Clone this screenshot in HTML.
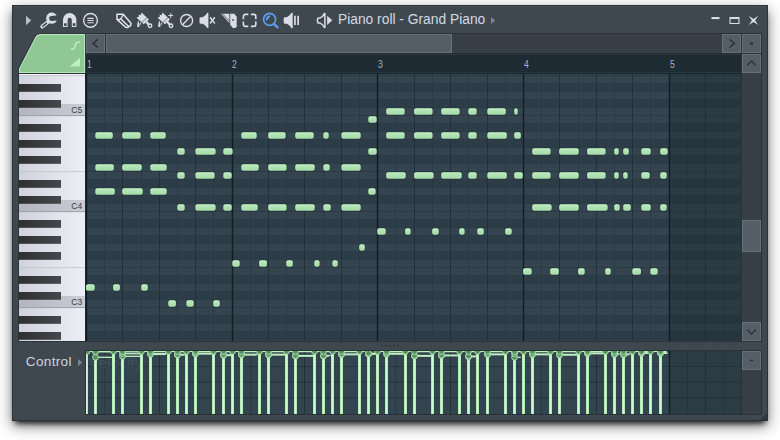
<!DOCTYPE html>
<html lang="en">
<head>
<meta charset="utf-8">
<title>Piano roll - Grand Piano</title>
<style>
html,body{margin:0;padding:0;background:#fff;}
body{width:780px;height:440px;position:relative;overflow:hidden;font-family:"Liberation Sans",sans-serif;}
.win{position:absolute;left:12px;top:5px;width:756px;height:416px;background:#3f484f;box-sizing:border-box;border:1px solid #2b3339;box-shadow:0 5px 14px 0 rgba(0,0,0,.48), 0 5px 6px -3px rgba(0,0,0,.9), inset 0 1px 0 rgba(255,255,255,.05);}
.abs{position:absolute;}
.page{position:absolute;left:-13px;top:-6px;width:780px;height:440px;}
.title{position:absolute;left:338px;top:11px;font-size:13.8px;line-height:17px;color:#d4d8e2;white-space:nowrap;letter-spacing:0px;}
.btn{position:absolute;box-sizing:border-box;background:#555e66;border:1px solid #687179;}
.track{position:absolute;background-color:#333a41;background-image:linear-gradient(45deg,#3c444b 25%,transparent 25%,transparent 75%,#3c444b 75%),linear-gradient(45deg,#3c444b 25%,transparent 25%,transparent 75%,#3c444b 75%);background-size:2px 2px;background-position:0 0,1px 1px;}
.timeline{position:absolute;left:86px;top:53px;width:655px;height:20px;background:linear-gradient(#222c33 0,#222c33 1px,#2a3740 1px,#2a3740 2px,#1f2b33 2px,#1f2b33 19px,#2a3740 19px,#2a3740 20px);}
.timeline span{position:absolute;transform:scaleX(.86);transform-origin:0 0;top:5.8px;font-size:10px;line-height:12px;color:#a6b3c3;}
.grid{position:absolute;left:86px;top:73px;}
.ctrl{position:absolute;left:86px;top:351px;}
.keys{position:absolute;left:19px;top:73px;}
.lbl{position:absolute;left:25.8px;top:353.6px;font-size:13.6px;line-height:16px;color:#cdd3de;letter-spacing:.3px;}
svg{display:block;}
</style>
</head>
<body>
<div class="win"><div class="page">

<!-- toolbar icons -->
<svg class="abs" style="left:0;top:0" width="780" height="34" viewBox="0 0 780 34">
<g fill="#d9dde7" stroke="none">
 <!-- menu arrow -->
 <path d="M26 15.8V25.2L31.2 20.5Z" fill="#b9bdc9"/>
 <!-- wrench -->
 <path d="M56.9 16H51.6A2.5 2.5 0 0 0 51.6 21H56.6A5.6 5.6 0 1 1 56.9 16Z" transform="rotate(-6 51.2 18.4)"/>
 <path d="M47.4 22.5L42.3 26.5" stroke="#d9dde7" stroke-width="4" stroke-linecap="round" fill="none"/>
 <path d="M46.4 23.3L42.7 26.2" stroke="#3f484f" stroke-width="1.5" stroke-linecap="round" fill="none"/>
 <!-- magnet -->
 <path d="M63 27V19.7A6.7 6.7 0 0 1 76.4 19.7V27H71.8V19.9A2.1 2.1 0 0 0 67.6 19.9V27Z"/>
 <path d="M64.1 23.3H66.6V26H64.1ZM72.8 23.3H75.3V26H72.8Z" fill="#3f484f"/>
 <!-- playlist circle -->
 <circle cx="90.5" cy="20.4" r="6.9" fill="none" stroke="#d9dde7" stroke-width="1.4"/>
 <path d="M87.4 17.8H93.6V18.9H87.4ZM87.4 20H93.6V21.1H87.4ZM87.4 22.2H93.6V23.3H87.4Z"/>
 <!-- pencil -->
 <path d="M117 14.3H123.2L131 23.2L130.8 25.3L127.5 27.6L125.6 27.3L117 19.4Z" fill="none" stroke="#e2e6ee" stroke-width="1.5" stroke-linejoin="round"/>
 <path d="M123.2 14.3L121.8 17.6L119.4 19.7L117 19.4" fill="none" stroke="#e2e6ee" stroke-width="1.3" stroke-linejoin="round"/>
 <path d="M120.7 18.8L128.6 26.5" fill="none" stroke="#e2e6ee" stroke-width="1.4"/>
 <!-- brush 1 -->
 <g id="brush">
  <path d="M136.6 17.7L139 16.4L138.5 14.5L140.6 15.3L141.5 12.4L149 19.5L143.8 24.2Z"/>
  <path d="M147.1 17.5L141.7 22.7" stroke="#3f484f" stroke-width="0.7" fill="none"/>
  <path d="M146.2 21.8L149 24.8" stroke="#d9dde7" stroke-width="2.4" fill="none"/>
  <circle cx="150" cy="25.7" r="1.75" fill="none" stroke="#d9dde7" stroke-width="1.4"/>
  <path d="M138.3 20.2Q140.2 24.4 139.3 27.1H137.3Q136.8 24 138.3 20.2Z"/>
  <path d="M140.5 22Q141.5 23.6 140.9 24.8H140Q139.8 23.6 140.5 22Z"/>
 </g>
 <use href="#brush" x="21" y="0"/>
 <path d="M168.3 15H173.2V16H168.3ZM170.25 13.1H171.25V17.9H170.25Z"/>
 <!-- no sign -->
 <circle cx="186.6" cy="20.5" r="6" fill="none" stroke="#d9dde7" stroke-width="1.4"/>
 <path d="M182.5 24.7L190.8 16.3" stroke="#d9dde7" stroke-width="1.4" fill="none"/>
 <!-- mute -->
 <path d="M200.9 17.3H202.6Q205.7 16 207.3 12.8H208.4V28.1H207.3Q205.7 25 202.6 23.7H200.9Q199.5 23.7 199.5 22.4V18.6Q199.5 17.3 200.9 17.3Z"/>
 <path d="M210 17.3L214.8 23.5M214.8 17.3L210 23.5" stroke="#d9dde7" stroke-width="1.4" fill="none"/>
 <!-- slice -->
 <path d="M221 13.7H229.4V23Z"/>
 <path d="M222.6 13.9L229.2 21" stroke="#3f484f" stroke-width="0.8" fill="none"/>
 <path d="M230.2 13.7H234.2L236.7 16.7V26.6L235.4 27.9H232.9L230.2 24.8Z"/>
 <rect x="232.2" y="19.1" width="1.5" height="1.7" fill="#3f484f"/>
 <!-- select -->
 <path d="M248.3 14.4H245.6Q243.4 14.4 243.4 16.6V19.2M250.9 14.4H253.6Q255.8 14.4 255.8 16.6V19.2M243.4 21.6V24.2Q243.4 26.4 245.6 26.4H248.3M255.8 21.6V24.2Q255.8 26.4 253.6 26.4H250.9" fill="none" stroke="#d9dde7" stroke-width="1.6"/>
 <!-- zoom (blue) -->
 <circle cx="269.6" cy="19.4" r="6" fill="none" stroke="#5d9cf5" stroke-width="1.6"/>
 <path d="M274.4 24.4L277.4 27.1" stroke="#5d9cf5" stroke-width="2.6" stroke-linecap="round" fill="none"/>
 <path d="M266.2 21.2A3.9 3.9 0 0 1 270.8 15.7Z" fill="#5d9cf5"/>
 <!-- speaker bars -->
 <path d="M285.1 17.3H286.8Q289.9 16 291.5 12.8H292.7V28.2H291.5Q289.9 25 286.8 23.7H285.1Q283.7 23.7 283.7 22.4V18.6Q283.7 17.3 285.1 17.3Z"/>
 <path d="M294.1 15.7H295.8V24.9H294.1ZM297.3 15.7H299V24.9H297.3Z"/>
 <!-- title speaker -->
 <path d="M318.6 17.9H320.2Q323 16.6 324.3 13.6H324.9V27.4H324.3Q323 24.4 320.2 23.1H318.6Q317.5 23.1 317.5 22V19Q317.5 17.9 318.6 17.9Z" fill="none" stroke="#d9dde7" stroke-width="1.5" stroke-linejoin="round"/>
 <path d="M327.1 15.7V24.9L332.3 20.3Z"/>
 <!-- title arrow -->
 <path d="M491 17V24L495.2 20.5Z" fill="#7c848e"/>
 <!-- window buttons -->
 <rect x="711.5" y="17" width="8" height="2.1"/>
 <path d="M729.5 17H739.5V24H729.5ZM730.6 19.1V22.9H738.4V19.1Z" fill-rule="evenodd"/>
 <path d="M748.7 15.7L753.5 18.9L758.3 15.7L755.1 20.4L758.3 25.1L753.5 21.9L748.7 25.1L751.9 20.4Z"/>
</g>
</svg>
<div class="title">Piano roll - Grand Piano</div>

<!-- frames -->
<div class="abs" style="left:85px;top:33px;width:677px;height:309px;background:#2a3239"></div>
<div class="abs" style="left:18px;top:73px;width:68px;height:269px;background:#2a3239"></div>
<div class="abs" style="left:85px;top:350px;width:677px;height:65px;background:#2a3239"></div>
<!-- top-left green tab -->
<svg class="abs" style="left:17px;top:33px" width="70" height="42" viewBox="17 33 70 42">
 <path d="M19.5 72.5V68.6L35.6 37.4Q37.1 34.5 40.2 34.5H84.5V72.5Z" fill="#8fc795" stroke="#b7e9b9" stroke-width="1.1"/>
 <path d="M18.4 72.5V68.3L34.6 36.9Q36.4 33.4 40.2 33.4H85.5" fill="none" stroke="#2b343a" stroke-width="1.1" opacity=".8"/>
 <path d="M70.8 49H73.2Q74.2 49 74.6 47.6L76 43.6Q76.5 42.2 77.8 42.2H80.4" fill="none" stroke="#bfeec1" stroke-width="1.5"/>
 <path d="M69.6 66.4L80 57.8V66.4Z" fill="#bfeec1"/>
</svg>

<!-- horizontal scrollbar -->
<div class="btn" style="left:86px;top:34px;width:19px;height:19px"></div>
<div class="track" style="left:106px;top:34px;width:616px;height:19px"></div>
<div class="btn" style="left:106px;top:34px;width:346px;height:19px"></div>
<div class="btn" style="left:722px;top:34px;width:19px;height:19px"></div>
<div class="btn" style="left:742px;top:34px;width:19px;height:19px"></div>
<div class="btn" style="left:742px;top:54px;width:19px;height:19px"></div>
<div class="track" style="left:742px;top:73px;width:19px;height:249px"></div>
<div class="btn" style="left:742px;top:220px;width:19px;height:32px"></div>
<div class="btn" style="left:742px;top:322px;width:19px;height:19px"></div>
<div class="btn" style="left:742px;top:351px;width:19px;height:19px"></div>
<div class="track" style="left:742px;top:370px;width:19px;height:44px"></div>
<svg class="abs" style="left:0;top:30px" width="780" height="390" viewBox="0 30 780 390">
 <g fill="none" stroke="#262d33" stroke-width="1.3">
  <path d="M97.9 39.2L93.1 43.4L97.9 47.6"/>
  <path d="M729.6 39.2L734.4 43.4L729.6 47.6"/>
  <path d="M747.3 65.4L751.5 60.9L755.7 65.4"/>
  <path d="M747.3 329.6L751.5 334.1L755.7 329.6"/>
 </g>
 <rect x="749.9" y="42.5" width="3.1" height="2" fill="#262d33"/>
 <rect x="749.9" y="359.7" width="3.1" height="1.3" fill="#262d33"/>
 <g fill="#2e363c"><rect x="381.2" y="345" width="1.6" height="1.6"/><rect x="385.2" y="345" width="1.6" height="1.6"/><rect x="389.2" y="345" width="1.6" height="1.6"/><rect x="393.2" y="345" width="1.6" height="1.6"/><rect x="397.2" y="345" width="1.6" height="1.6"/></g>
 <path d="M78 359V366L82.3 362.5Z" fill="#7c848e"/>
 <path d="M767 413V420H760Z" fill="#30383e"/>
</svg>

<!-- timeline -->
<div class="timeline"><span style="left:.5px">1</span><span style="left:146.4px">2</span><span style="left:292.1px">3</span><span style="left:437.6px">4</span><span style="left:583.7px">5</span></div>

<!-- piano keys -->
<svg class="keys" width="67" height="268" viewBox="19 73 67 268">
 <defs>
  <linearGradient id="wk" x1="0" y1="0" x2="1" y2="0"><stop offset="0" stop-color="#cfd2da"/><stop offset=".55" stop-color="#e0e3ea"/><stop offset="1" stop-color="#eceef5"/></linearGradient>
  <linearGradient id="ck" x1="0" y1="0" x2="1" y2="0"><stop offset="0" stop-color="#b3b6be"/><stop offset="1" stop-color="#c9ccd4"/></linearGradient>
  <linearGradient id="bk" x1="0" y1="0" x2="1" y2="0"><stop offset="0" stop-color="#2e2f31"/><stop offset="1" stop-color="#47484b"/></linearGradient>
 </defs>
 <rect x="19" y="73" width="66" height="268" fill="url(#wk)"/>
 <rect x="19" y="73" width="66" height="1" fill="#2a3239"/><rect x="19" y="74" width="66" height="1.1" fill="#f4f5fa"/>
 <g fill="url(#ck)"><rect x="19" y="104" width="66" height="12"/><rect x="19" y="200" width="66" height="12"/><rect x="19" y="296" width="66" height="12"/></g>
 <g fill="#9a9da6"><rect x="19" y="115.2" width="66" height=".9"/><rect x="19" y="211.2" width="66" height=".9"/><rect x="19" y="307.2" width="66" height=".9"/></g>
 <g fill="#bfc2ca"><rect x="19" y="75.3" width="66" height=".8"/><rect x="19" y="171.3" width="66" height=".8"/><rect x="19" y="267.3" width="66" height=".8"/></g>
 <g fill="url(#bk)">
  <rect x="19" y="84" width="42" height="7.8"/><rect x="19" y="100" width="42" height="7.8"/>
  <rect x="19" y="124" width="42" height="7.8"/><rect x="19" y="140" width="42" height="7.8"/><rect x="19" y="156" width="42" height="7.8"/>
  <rect x="19" y="180" width="42" height="7.8"/><rect x="19" y="196" width="42" height="7.8"/>
  <rect x="19" y="220" width="42" height="7.8"/><rect x="19" y="236" width="42" height="7.8"/><rect x="19" y="252" width="42" height="7.8"/>
  <rect x="19" y="276" width="42" height="7.8"/><rect x="19" y="292" width="42" height="7.8"/>
  <rect x="19" y="316" width="42" height="7.8"/><rect x="19" y="332" width="42" height="7.8"/>
 </g>
 <g font-family="Liberation Sans, sans-serif" font-size="9.6" fill="#363e4c">
  <text x="71.3" y="113" textLength="10.9" lengthAdjust="spacingAndGlyphs">C5</text><text x="71.3" y="209" textLength="10.9" lengthAdjust="spacingAndGlyphs">C4</text><text x="71.3" y="305" textLength="10.9" lengthAdjust="spacingAndGlyphs">C3</text>
 </g>
 <rect x="85" y="73" width="1" height="268" fill="#1d262d"/>
</svg>

<svg class="grid" width="655" height="268" viewBox="86 73 655 268">
<rect x="86" y="73" width="655" height="268" fill="#34454f"/>
<rect x="86" y="84" width="655" height="8" fill="#2d3d47"/>
<rect x="86" y="100" width="655" height="8" fill="#2d3d47"/>
<rect x="86" y="124" width="655" height="8" fill="#2d3d47"/>
<rect x="86" y="140" width="655" height="8" fill="#2d3d47"/>
<rect x="86" y="156" width="655" height="8" fill="#2d3d47"/>
<rect x="86" y="180" width="655" height="8" fill="#2d3d47"/>
<rect x="86" y="196" width="655" height="8" fill="#2d3d47"/>
<rect x="86" y="220" width="655" height="8" fill="#2d3d47"/>
<rect x="86" y="236" width="655" height="8" fill="#2d3d47"/>
<rect x="86" y="252" width="655" height="8" fill="#2d3d47"/>
<rect x="86" y="276" width="655" height="8" fill="#2d3d47"/>
<rect x="86" y="292" width="655" height="8" fill="#2d3d47"/>
<rect x="86" y="316" width="655" height="8" fill="#2d3d47"/>
<rect x="86" y="332" width="655" height="8" fill="#2d3d47"/>
<path d="M86 75.5H741M86 83.5H741M86 91.5H741M86 99.5H741M86 107.5H741M86 115.5H741M86 123.5H741M86 131.5H741M86 139.5H741M86 147.5H741M86 155.5H741M86 163.5H741M86 171.5H741M86 179.5H741M86 187.5H741M86 195.5H741M86 203.5H741M86 211.5H741M86 219.5H741M86 227.5H741M86 235.5H741M86 243.5H741M86 251.5H741M86 259.5H741M86 267.5H741M86 275.5H741M86 283.5H741M86 291.5H741M86 299.5H741M86 307.5H741M86 315.5H741M86 323.5H741M86 331.5H741M86 339.5H741M86 347.5H741" stroke="#2b3b45" stroke-width="1" fill="none"/>
<path d="M104.5 73V341M141.5 73V341M177.5 73V341M213.5 73V341M250.5 73V341M286.5 73V341M323.5 73V341M359.5 73V341M395.5 73V341M432.5 73V341M468.5 73V341M505.5 73V341M541.5 73V341M578.5 73V341M614.5 73V341M650.5 73V341M687.5 73V341M723.5 73V341" stroke="#2a3943" stroke-width="1" fill="none"/>
<path d="M122.5 73V341M159.5 73V341M195.5 73V341M268.5 73V341M304.5 73V341M341.5 73V341M414.5 73V341M450.5 73V341M487.5 73V341M559.5 73V341M596.5 73V341M632.5 73V341M705.5 73V341" stroke="#22303a" stroke-width="1" fill="none"/>
<path d="M86.5 73V341M232.5 73V341M377.5 73V341M523.5 73V341M669.5 73V341" stroke="#121c24" stroke-width="1.4" fill="none"/>
<rect x="670" y="73" width="71" height="268" fill="#1c2a33" opacity="0.36"/>
<rect x="86" y="73" width="655" height="1" fill="#1a252d"/>
<rect x="385.6" y="107.7" width="19.7" height="7.8" rx="2.2" fill="#1f2d35" opacity="0.55"/>
<rect x="386.2" y="108.2" width="18.5" height="6.6" rx="1.8" fill="url(#no)"/>
<rect x="387.2" y="109.3" width="16.5" height="4.5" rx="1" fill="url(#ng)"/>
<rect x="413.5" y="107.7" width="19.7" height="7.8" rx="2.2" fill="#1f2d35" opacity="0.55"/>
<rect x="414.1" y="108.2" width="18.5" height="6.6" rx="1.8" fill="url(#no)"/>
<rect x="415.1" y="109.3" width="16.5" height="4.5" rx="1" fill="url(#ng)"/>
<rect x="440.6" y="107.7" width="19.6" height="7.8" rx="2.2" fill="#1f2d35" opacity="0.55"/>
<rect x="441.2" y="108.2" width="18.4" height="6.6" rx="1.8" fill="url(#no)"/>
<rect x="442.2" y="109.3" width="16.4" height="4.5" rx="1" fill="url(#ng)"/>
<rect x="467.7" y="107.7" width="9.6" height="7.8" rx="2.2" fill="#1f2d35" opacity="0.55"/>
<rect x="468.3" y="108.2" width="8.4" height="6.6" rx="1.8" fill="url(#no)"/>
<rect x="469.3" y="109.3" width="6.4" height="4.5" rx="1" fill="url(#ng)"/>
<rect x="486.7" y="107.7" width="19.7" height="7.8" rx="2.2" fill="#1f2d35" opacity="0.55"/>
<rect x="487.3" y="108.2" width="18.5" height="6.6" rx="1.8" fill="url(#no)"/>
<rect x="488.3" y="109.3" width="16.5" height="4.5" rx="1" fill="url(#ng)"/>
<rect x="513.6" y="107.7" width="4.7" height="7.8" rx="2.2" fill="#1f2d35" opacity="0.55"/>
<rect x="514.2" y="108.2" width="3.5" height="6.6" rx="1.8" fill="url(#no)"/>
<rect x="515.2" y="109.3" width="1.5" height="4.5" rx="1" fill="url(#ng)"/>
<rect x="367.7" y="115.7" width="9.6" height="7.8" rx="2.2" fill="#1f2d35" opacity="0.55"/>
<rect x="368.3" y="116.2" width="8.4" height="6.6" rx="1.8" fill="url(#no)"/>
<rect x="369.3" y="117.3" width="6.4" height="4.5" rx="1" fill="url(#ng)"/>
<rect x="94.7" y="131.7" width="18.7" height="7.8" rx="2.2" fill="#1f2d35" opacity="0.55"/>
<rect x="95.3" y="132.2" width="17.5" height="6.6" rx="1.8" fill="url(#no)"/>
<rect x="96.3" y="133.3" width="15.5" height="4.5" rx="1" fill="url(#ng)"/>
<rect x="121.6" y="131.7" width="19.7" height="7.8" rx="2.2" fill="#1f2d35" opacity="0.55"/>
<rect x="122.2" y="132.2" width="18.5" height="6.6" rx="1.8" fill="url(#no)"/>
<rect x="123.2" y="133.3" width="16.5" height="4.5" rx="1" fill="url(#ng)"/>
<rect x="149.7" y="131.7" width="16.6" height="7.8" rx="2.2" fill="#1f2d35" opacity="0.55"/>
<rect x="150.3" y="132.2" width="15.4" height="6.6" rx="1.8" fill="url(#no)"/>
<rect x="151.3" y="133.3" width="13.4" height="4.5" rx="1" fill="url(#ng)"/>
<rect x="240.7" y="131.7" width="16.6" height="7.8" rx="2.2" fill="#1f2d35" opacity="0.55"/>
<rect x="241.3" y="132.2" width="15.4" height="6.6" rx="1.8" fill="url(#no)"/>
<rect x="242.3" y="133.3" width="13.4" height="4.5" rx="1" fill="url(#ng)"/>
<rect x="267.6" y="131.7" width="18.6" height="7.8" rx="2.2" fill="#1f2d35" opacity="0.55"/>
<rect x="268.2" y="132.2" width="17.4" height="6.6" rx="1.8" fill="url(#no)"/>
<rect x="269.2" y="133.3" width="15.4" height="4.5" rx="1" fill="url(#ng)"/>
<rect x="294.6" y="131.7" width="19.7" height="7.8" rx="2.2" fill="#1f2d35" opacity="0.55"/>
<rect x="295.2" y="132.2" width="18.5" height="6.6" rx="1.8" fill="url(#no)"/>
<rect x="296.2" y="133.3" width="16.5" height="4.5" rx="1" fill="url(#ng)"/>
<rect x="322.7" y="131.7" width="6.6" height="7.8" rx="2.2" fill="#1f2d35" opacity="0.55"/>
<rect x="323.3" y="132.2" width="5.4" height="6.6" rx="1.8" fill="url(#no)"/>
<rect x="324.3" y="133.3" width="3.4" height="4.5" rx="1" fill="url(#ng)"/>
<rect x="340.8" y="131.7" width="20.5" height="7.8" rx="2.2" fill="#1f2d35" opacity="0.55"/>
<rect x="341.4" y="132.2" width="19.3" height="6.6" rx="1.8" fill="url(#no)"/>
<rect x="342.4" y="133.3" width="17.3" height="4.5" rx="1" fill="url(#ng)"/>
<rect x="385.6" y="131.7" width="19.7" height="7.8" rx="2.2" fill="#1f2d35" opacity="0.55"/>
<rect x="386.2" y="132.2" width="18.5" height="6.6" rx="1.8" fill="url(#no)"/>
<rect x="387.2" y="133.3" width="16.5" height="4.5" rx="1" fill="url(#ng)"/>
<rect x="413.5" y="131.7" width="19.7" height="7.8" rx="2.2" fill="#1f2d35" opacity="0.55"/>
<rect x="414.1" y="132.2" width="18.5" height="6.6" rx="1.8" fill="url(#no)"/>
<rect x="415.1" y="133.3" width="16.5" height="4.5" rx="1" fill="url(#ng)"/>
<rect x="440.6" y="131.7" width="19.6" height="7.8" rx="2.2" fill="#1f2d35" opacity="0.55"/>
<rect x="441.2" y="132.2" width="18.4" height="6.6" rx="1.8" fill="url(#no)"/>
<rect x="442.2" y="133.3" width="16.4" height="4.5" rx="1" fill="url(#ng)"/>
<rect x="467.7" y="131.7" width="9.6" height="7.8" rx="2.2" fill="#1f2d35" opacity="0.55"/>
<rect x="468.3" y="132.2" width="8.4" height="6.6" rx="1.8" fill="url(#no)"/>
<rect x="469.3" y="133.3" width="6.4" height="4.5" rx="1" fill="url(#ng)"/>
<rect x="486.7" y="131.7" width="20.7" height="7.8" rx="2.2" fill="#1f2d35" opacity="0.55"/>
<rect x="487.3" y="132.2" width="19.5" height="6.6" rx="1.8" fill="url(#no)"/>
<rect x="488.3" y="133.3" width="17.5" height="4.5" rx="1" fill="url(#ng)"/>
<rect x="513.6" y="131.7" width="7.8" height="7.8" rx="2.2" fill="#1f2d35" opacity="0.55"/>
<rect x="514.2" y="132.2" width="6.6" height="6.6" rx="1.8" fill="url(#no)"/>
<rect x="515.2" y="133.3" width="4.6" height="4.5" rx="1" fill="url(#ng)"/>
<rect x="176.7" y="147.7" width="8.6" height="7.8" rx="2.2" fill="#1f2d35" opacity="0.55"/>
<rect x="177.3" y="148.2" width="7.4" height="6.6" rx="1.8" fill="url(#no)"/>
<rect x="178.3" y="149.3" width="5.4" height="4.5" rx="1" fill="url(#ng)"/>
<rect x="194.8" y="147.7" width="21.4" height="7.8" rx="2.2" fill="#1f2d35" opacity="0.55"/>
<rect x="195.4" y="148.2" width="20.2" height="6.6" rx="1.8" fill="url(#no)"/>
<rect x="196.4" y="149.3" width="18.2" height="4.5" rx="1" fill="url(#ng)"/>
<rect x="222.7" y="147.7" width="10.5" height="7.8" rx="2.2" fill="#1f2d35" opacity="0.55"/>
<rect x="223.3" y="148.2" width="9.3" height="6.6" rx="1.8" fill="url(#no)"/>
<rect x="224.3" y="149.3" width="7.3" height="4.5" rx="1" fill="url(#ng)"/>
<rect x="367.7" y="147.7" width="9.6" height="7.8" rx="2.2" fill="#1f2d35" opacity="0.55"/>
<rect x="368.3" y="148.2" width="8.4" height="6.6" rx="1.8" fill="url(#no)"/>
<rect x="369.3" y="149.3" width="6.4" height="4.5" rx="1" fill="url(#ng)"/>
<rect x="531.6" y="147.7" width="19.6" height="7.8" rx="2.2" fill="#1f2d35" opacity="0.55"/>
<rect x="532.2" y="148.2" width="18.4" height="6.6" rx="1.8" fill="url(#no)"/>
<rect x="533.2" y="149.3" width="16.4" height="4.5" rx="1" fill="url(#ng)"/>
<rect x="558.6" y="147.7" width="20.7" height="7.8" rx="2.2" fill="#1f2d35" opacity="0.55"/>
<rect x="559.2" y="148.2" width="19.5" height="6.6" rx="1.8" fill="url(#no)"/>
<rect x="560.2" y="149.3" width="17.5" height="4.5" rx="1" fill="url(#ng)"/>
<rect x="586.5" y="147.7" width="19.7" height="7.8" rx="2.2" fill="#1f2d35" opacity="0.55"/>
<rect x="587.1" y="148.2" width="18.5" height="6.6" rx="1.8" fill="url(#no)"/>
<rect x="588.1" y="149.3" width="16.5" height="4.5" rx="1" fill="url(#ng)"/>
<rect x="613.6" y="147.7" width="5.7" height="7.8" rx="2.2" fill="#1f2d35" opacity="0.55"/>
<rect x="614.2" y="148.2" width="4.5" height="6.6" rx="1.8" fill="url(#no)"/>
<rect x="615.2" y="149.3" width="2.5" height="4.5" rx="1" fill="url(#ng)"/>
<rect x="622.6" y="147.7" width="6.8" height="7.8" rx="2.2" fill="#1f2d35" opacity="0.55"/>
<rect x="623.2" y="148.2" width="5.6" height="6.6" rx="1.8" fill="url(#no)"/>
<rect x="624.2" y="149.3" width="3.6" height="4.5" rx="1" fill="url(#ng)"/>
<rect x="640.7" y="147.7" width="10.6" height="7.8" rx="2.2" fill="#1f2d35" opacity="0.55"/>
<rect x="641.3" y="148.2" width="9.4" height="6.6" rx="1.8" fill="url(#no)"/>
<rect x="642.3" y="149.3" width="7.4" height="4.5" rx="1" fill="url(#ng)"/>
<rect x="659.6" y="147.7" width="8.7" height="7.8" rx="2.2" fill="#1f2d35" opacity="0.55"/>
<rect x="660.2" y="148.2" width="7.5" height="6.6" rx="1.8" fill="url(#no)"/>
<rect x="661.2" y="149.3" width="5.5" height="4.5" rx="1" fill="url(#ng)"/>
<rect x="94.7" y="163.7" width="19.7" height="7.8" rx="2.2" fill="#1f2d35" opacity="0.55"/>
<rect x="95.3" y="164.2" width="18.5" height="6.6" rx="1.8" fill="url(#no)"/>
<rect x="96.3" y="165.3" width="16.5" height="4.5" rx="1" fill="url(#ng)"/>
<rect x="121.6" y="163.7" width="20.7" height="7.8" rx="2.2" fill="#1f2d35" opacity="0.55"/>
<rect x="122.2" y="164.2" width="19.5" height="6.6" rx="1.8" fill="url(#no)"/>
<rect x="123.2" y="165.3" width="17.5" height="4.5" rx="1" fill="url(#ng)"/>
<rect x="149.7" y="163.7" width="17.6" height="7.8" rx="2.2" fill="#1f2d35" opacity="0.55"/>
<rect x="150.3" y="164.2" width="16.4" height="6.6" rx="1.8" fill="url(#no)"/>
<rect x="151.3" y="165.3" width="14.4" height="4.5" rx="1" fill="url(#ng)"/>
<rect x="240.7" y="163.7" width="18.6" height="7.8" rx="2.2" fill="#1f2d35" opacity="0.55"/>
<rect x="241.3" y="164.2" width="17.4" height="6.6" rx="1.8" fill="url(#no)"/>
<rect x="242.3" y="165.3" width="15.4" height="4.5" rx="1" fill="url(#ng)"/>
<rect x="267.6" y="163.7" width="19.6" height="7.8" rx="2.2" fill="#1f2d35" opacity="0.55"/>
<rect x="268.2" y="164.2" width="18.4" height="6.6" rx="1.8" fill="url(#no)"/>
<rect x="269.2" y="165.3" width="16.4" height="4.5" rx="1" fill="url(#ng)"/>
<rect x="294.6" y="163.7" width="20.7" height="7.8" rx="2.2" fill="#1f2d35" opacity="0.55"/>
<rect x="295.2" y="164.2" width="19.5" height="6.6" rx="1.8" fill="url(#no)"/>
<rect x="296.2" y="165.3" width="17.5" height="4.5" rx="1" fill="url(#ng)"/>
<rect x="322.7" y="163.7" width="7.6" height="7.8" rx="2.2" fill="#1f2d35" opacity="0.55"/>
<rect x="323.3" y="164.2" width="6.4" height="6.6" rx="1.8" fill="url(#no)"/>
<rect x="324.3" y="165.3" width="4.4" height="4.5" rx="1" fill="url(#ng)"/>
<rect x="340.8" y="163.7" width="20.5" height="7.8" rx="2.2" fill="#1f2d35" opacity="0.55"/>
<rect x="341.4" y="164.2" width="19.3" height="6.6" rx="1.8" fill="url(#no)"/>
<rect x="342.4" y="165.3" width="17.3" height="4.5" rx="1" fill="url(#ng)"/>
<rect x="176.7" y="171.7" width="8.6" height="7.8" rx="2.2" fill="#1f2d35" opacity="0.55"/>
<rect x="177.3" y="172.2" width="7.4" height="6.6" rx="1.8" fill="url(#no)"/>
<rect x="178.3" y="173.3" width="5.4" height="4.5" rx="1" fill="url(#ng)"/>
<rect x="194.8" y="171.7" width="20.4" height="7.8" rx="2.2" fill="#1f2d35" opacity="0.55"/>
<rect x="195.4" y="172.2" width="19.2" height="6.6" rx="1.8" fill="url(#no)"/>
<rect x="196.4" y="173.3" width="17.2" height="4.5" rx="1" fill="url(#ng)"/>
<rect x="222.7" y="171.7" width="9.6" height="7.8" rx="2.2" fill="#1f2d35" opacity="0.55"/>
<rect x="223.3" y="172.2" width="8.4" height="6.6" rx="1.8" fill="url(#no)"/>
<rect x="224.3" y="173.3" width="6.4" height="4.5" rx="1" fill="url(#ng)"/>
<rect x="385.6" y="171.7" width="20.7" height="7.8" rx="2.2" fill="#1f2d35" opacity="0.55"/>
<rect x="386.2" y="172.2" width="19.5" height="6.6" rx="1.8" fill="url(#no)"/>
<rect x="387.2" y="173.3" width="17.5" height="4.5" rx="1" fill="url(#ng)"/>
<rect x="413.5" y="171.7" width="20.7" height="7.8" rx="2.2" fill="#1f2d35" opacity="0.55"/>
<rect x="414.1" y="172.2" width="19.5" height="6.6" rx="1.8" fill="url(#no)"/>
<rect x="415.1" y="173.3" width="17.5" height="4.5" rx="1" fill="url(#ng)"/>
<rect x="440.6" y="171.7" width="21.7" height="7.8" rx="2.2" fill="#1f2d35" opacity="0.55"/>
<rect x="441.2" y="172.2" width="20.5" height="6.6" rx="1.8" fill="url(#no)"/>
<rect x="442.2" y="173.3" width="18.5" height="4.5" rx="1" fill="url(#ng)"/>
<rect x="467.7" y="171.7" width="9.6" height="7.8" rx="2.2" fill="#1f2d35" opacity="0.55"/>
<rect x="468.3" y="172.2" width="8.4" height="6.6" rx="1.8" fill="url(#no)"/>
<rect x="469.3" y="173.3" width="6.4" height="4.5" rx="1" fill="url(#ng)"/>
<rect x="486.7" y="171.7" width="20.7" height="7.8" rx="2.2" fill="#1f2d35" opacity="0.55"/>
<rect x="487.3" y="172.2" width="19.5" height="6.6" rx="1.8" fill="url(#no)"/>
<rect x="488.3" y="173.3" width="17.5" height="4.5" rx="1" fill="url(#ng)"/>
<rect x="513.6" y="171.7" width="9.8" height="7.8" rx="2.2" fill="#1f2d35" opacity="0.55"/>
<rect x="514.2" y="172.2" width="8.6" height="6.6" rx="1.8" fill="url(#no)"/>
<rect x="515.2" y="173.3" width="6.6" height="4.5" rx="1" fill="url(#ng)"/>
<rect x="531.6" y="171.7" width="19.6" height="7.8" rx="2.2" fill="#1f2d35" opacity="0.55"/>
<rect x="532.2" y="172.2" width="18.4" height="6.6" rx="1.8" fill="url(#no)"/>
<rect x="533.2" y="173.3" width="16.4" height="4.5" rx="1" fill="url(#ng)"/>
<rect x="558.6" y="171.7" width="20.7" height="7.8" rx="2.2" fill="#1f2d35" opacity="0.55"/>
<rect x="559.2" y="172.2" width="19.5" height="6.6" rx="1.8" fill="url(#no)"/>
<rect x="560.2" y="173.3" width="17.5" height="4.5" rx="1" fill="url(#ng)"/>
<rect x="586.5" y="171.7" width="19.7" height="7.8" rx="2.2" fill="#1f2d35" opacity="0.55"/>
<rect x="587.1" y="172.2" width="18.5" height="6.6" rx="1.8" fill="url(#no)"/>
<rect x="588.1" y="173.3" width="16.5" height="4.5" rx="1" fill="url(#ng)"/>
<rect x="613.6" y="171.7" width="5.7" height="7.8" rx="2.2" fill="#1f2d35" opacity="0.55"/>
<rect x="614.2" y="172.2" width="4.5" height="6.6" rx="1.8" fill="url(#no)"/>
<rect x="615.2" y="173.3" width="2.5" height="4.5" rx="1" fill="url(#ng)"/>
<rect x="622.6" y="171.7" width="5.7" height="7.8" rx="2.2" fill="#1f2d35" opacity="0.55"/>
<rect x="623.2" y="172.2" width="4.5" height="6.6" rx="1.8" fill="url(#no)"/>
<rect x="624.2" y="173.3" width="2.5" height="4.5" rx="1" fill="url(#ng)"/>
<rect x="640.7" y="171.7" width="9.6" height="7.8" rx="2.2" fill="#1f2d35" opacity="0.55"/>
<rect x="641.3" y="172.2" width="8.4" height="6.6" rx="1.8" fill="url(#no)"/>
<rect x="642.3" y="173.3" width="6.4" height="4.5" rx="1" fill="url(#ng)"/>
<rect x="659.6" y="171.7" width="7.7" height="7.8" rx="2.2" fill="#1f2d35" opacity="0.55"/>
<rect x="660.2" y="172.2" width="6.5" height="6.6" rx="1.8" fill="url(#no)"/>
<rect x="661.2" y="173.3" width="4.5" height="4.5" rx="1" fill="url(#ng)"/>
<rect x="94.7" y="187.7" width="20.7" height="7.8" rx="2.2" fill="#1f2d35" opacity="0.55"/>
<rect x="95.3" y="188.2" width="19.5" height="6.6" rx="1.8" fill="url(#no)"/>
<rect x="96.3" y="189.3" width="17.5" height="4.5" rx="1" fill="url(#ng)"/>
<rect x="121.6" y="187.7" width="21.7" height="7.8" rx="2.2" fill="#1f2d35" opacity="0.55"/>
<rect x="122.2" y="188.2" width="20.5" height="6.6" rx="1.8" fill="url(#no)"/>
<rect x="123.2" y="189.3" width="18.5" height="4.5" rx="1" fill="url(#ng)"/>
<rect x="149.7" y="187.7" width="17.6" height="7.8" rx="2.2" fill="#1f2d35" opacity="0.55"/>
<rect x="150.3" y="188.2" width="16.4" height="6.6" rx="1.8" fill="url(#no)"/>
<rect x="151.3" y="189.3" width="14.4" height="4.5" rx="1" fill="url(#ng)"/>
<rect x="367.7" y="187.7" width="8.5" height="7.8" rx="2.2" fill="#1f2d35" opacity="0.55"/>
<rect x="368.3" y="188.2" width="7.3" height="6.6" rx="1.8" fill="url(#no)"/>
<rect x="369.3" y="189.3" width="5.3" height="4.5" rx="1" fill="url(#ng)"/>
<rect x="176.7" y="203.7" width="8.6" height="7.8" rx="2.2" fill="#1f2d35" opacity="0.55"/>
<rect x="177.3" y="204.2" width="7.4" height="6.6" rx="1.8" fill="url(#no)"/>
<rect x="178.3" y="205.3" width="5.4" height="4.5" rx="1" fill="url(#ng)"/>
<rect x="194.8" y="203.7" width="21.4" height="7.8" rx="2.2" fill="#1f2d35" opacity="0.55"/>
<rect x="195.4" y="204.2" width="20.2" height="6.6" rx="1.8" fill="url(#no)"/>
<rect x="196.4" y="205.3" width="18.2" height="4.5" rx="1" fill="url(#ng)"/>
<rect x="222.7" y="203.7" width="9.6" height="7.8" rx="2.2" fill="#1f2d35" opacity="0.55"/>
<rect x="223.3" y="204.2" width="8.4" height="6.6" rx="1.8" fill="url(#no)"/>
<rect x="224.3" y="205.3" width="6.4" height="4.5" rx="1" fill="url(#ng)"/>
<rect x="240.7" y="203.7" width="17.6" height="7.8" rx="2.2" fill="#1f2d35" opacity="0.55"/>
<rect x="241.3" y="204.2" width="16.4" height="6.6" rx="1.8" fill="url(#no)"/>
<rect x="242.3" y="205.3" width="14.4" height="4.5" rx="1" fill="url(#ng)"/>
<rect x="267.6" y="203.7" width="19.6" height="7.8" rx="2.2" fill="#1f2d35" opacity="0.55"/>
<rect x="268.2" y="204.2" width="18.4" height="6.6" rx="1.8" fill="url(#no)"/>
<rect x="269.2" y="205.3" width="16.4" height="4.5" rx="1" fill="url(#ng)"/>
<rect x="294.6" y="203.7" width="20.7" height="7.8" rx="2.2" fill="#1f2d35" opacity="0.55"/>
<rect x="295.2" y="204.2" width="19.5" height="6.6" rx="1.8" fill="url(#no)"/>
<rect x="296.2" y="205.3" width="17.5" height="4.5" rx="1" fill="url(#ng)"/>
<rect x="322.7" y="203.7" width="8.6" height="7.8" rx="2.2" fill="#1f2d35" opacity="0.55"/>
<rect x="323.3" y="204.2" width="7.4" height="6.6" rx="1.8" fill="url(#no)"/>
<rect x="324.3" y="205.3" width="5.4" height="4.5" rx="1" fill="url(#ng)"/>
<rect x="340.8" y="203.7" width="20.5" height="7.8" rx="2.2" fill="#1f2d35" opacity="0.55"/>
<rect x="341.4" y="204.2" width="19.3" height="6.6" rx="1.8" fill="url(#no)"/>
<rect x="342.4" y="205.3" width="17.3" height="4.5" rx="1" fill="url(#ng)"/>
<rect x="531.6" y="203.7" width="20.6" height="7.8" rx="2.2" fill="#1f2d35" opacity="0.55"/>
<rect x="532.2" y="204.2" width="19.4" height="6.6" rx="1.8" fill="url(#no)"/>
<rect x="533.2" y="205.3" width="17.4" height="4.5" rx="1" fill="url(#ng)"/>
<rect x="558.6" y="203.7" width="20.7" height="7.8" rx="2.2" fill="#1f2d35" opacity="0.55"/>
<rect x="559.2" y="204.2" width="19.5" height="6.6" rx="1.8" fill="url(#no)"/>
<rect x="560.2" y="205.3" width="17.5" height="4.5" rx="1" fill="url(#ng)"/>
<rect x="586.5" y="203.7" width="21.7" height="7.8" rx="2.2" fill="#1f2d35" opacity="0.55"/>
<rect x="587.1" y="204.2" width="20.5" height="6.6" rx="1.8" fill="url(#no)"/>
<rect x="588.1" y="205.3" width="18.5" height="4.5" rx="1" fill="url(#ng)"/>
<rect x="613.6" y="203.7" width="6.7" height="7.8" rx="2.2" fill="#1f2d35" opacity="0.55"/>
<rect x="614.2" y="204.2" width="5.5" height="6.6" rx="1.8" fill="url(#no)"/>
<rect x="615.2" y="205.3" width="3.5" height="4.5" rx="1" fill="url(#ng)"/>
<rect x="622.6" y="203.7" width="8.8" height="7.8" rx="2.2" fill="#1f2d35" opacity="0.55"/>
<rect x="623.2" y="204.2" width="7.6" height="6.6" rx="1.8" fill="url(#no)"/>
<rect x="624.2" y="205.3" width="5.6" height="4.5" rx="1" fill="url(#ng)"/>
<rect x="640.7" y="203.7" width="10.6" height="7.8" rx="2.2" fill="#1f2d35" opacity="0.55"/>
<rect x="641.3" y="204.2" width="9.4" height="6.6" rx="1.8" fill="url(#no)"/>
<rect x="642.3" y="205.3" width="7.4" height="4.5" rx="1" fill="url(#ng)"/>
<rect x="659.6" y="203.7" width="7.7" height="7.8" rx="2.2" fill="#1f2d35" opacity="0.55"/>
<rect x="660.2" y="204.2" width="6.5" height="6.6" rx="1.8" fill="url(#no)"/>
<rect x="661.2" y="205.3" width="4.5" height="4.5" rx="1" fill="url(#ng)"/>
<rect x="376.7" y="227.7" width="9.6" height="7.8" rx="2.2" fill="#1f2d35" opacity="0.55"/>
<rect x="377.3" y="228.2" width="8.4" height="6.6" rx="1.8" fill="url(#no)"/>
<rect x="378.3" y="229.3" width="6.4" height="4.5" rx="1" fill="url(#ng)"/>
<rect x="404.5" y="227.7" width="6.7" height="7.8" rx="2.2" fill="#1f2d35" opacity="0.55"/>
<rect x="405.1" y="228.2" width="5.5" height="6.6" rx="1.8" fill="url(#no)"/>
<rect x="406.1" y="229.3" width="3.5" height="4.5" rx="1" fill="url(#ng)"/>
<rect x="431.6" y="227.7" width="7.7" height="7.8" rx="2.2" fill="#1f2d35" opacity="0.55"/>
<rect x="432.2" y="228.2" width="6.5" height="6.6" rx="1.8" fill="url(#no)"/>
<rect x="433.2" y="229.3" width="4.5" height="4.5" rx="1" fill="url(#ng)"/>
<rect x="458.6" y="227.7" width="6.6" height="7.8" rx="2.2" fill="#1f2d35" opacity="0.55"/>
<rect x="459.2" y="228.2" width="5.4" height="6.6" rx="1.8" fill="url(#no)"/>
<rect x="460.2" y="229.3" width="3.4" height="4.5" rx="1" fill="url(#ng)"/>
<rect x="476.7" y="227.7" width="7.7" height="7.8" rx="2.2" fill="#1f2d35" opacity="0.55"/>
<rect x="477.3" y="228.2" width="6.5" height="6.6" rx="1.8" fill="url(#no)"/>
<rect x="478.3" y="229.3" width="4.5" height="4.5" rx="1" fill="url(#ng)"/>
<rect x="504.6" y="227.7" width="7.7" height="7.8" rx="2.2" fill="#1f2d35" opacity="0.55"/>
<rect x="505.2" y="228.2" width="6.5" height="6.6" rx="1.8" fill="url(#no)"/>
<rect x="506.2" y="229.3" width="4.5" height="4.5" rx="1" fill="url(#ng)"/>
<rect x="358.6" y="243.7" width="6.8" height="7.8" rx="2.2" fill="#1f2d35" opacity="0.55"/>
<rect x="359.2" y="244.2" width="5.6" height="6.6" rx="1.8" fill="url(#no)"/>
<rect x="360.2" y="245.3" width="3.6" height="4.5" rx="1" fill="url(#ng)"/>
<rect x="231.7" y="259.7" width="8.6" height="7.8" rx="2.2" fill="#1f2d35" opacity="0.55"/>
<rect x="232.3" y="260.2" width="7.4" height="6.6" rx="1.8" fill="url(#no)"/>
<rect x="233.3" y="261.3" width="5.4" height="4.5" rx="1" fill="url(#ng)"/>
<rect x="258.5" y="259.7" width="9" height="7.8" rx="2.2" fill="#1f2d35" opacity="0.55"/>
<rect x="259.1" y="260.2" width="7.8" height="6.6" rx="1.8" fill="url(#no)"/>
<rect x="260.1" y="261.3" width="5.8" height="4.5" rx="1" fill="url(#ng)"/>
<rect x="285.6" y="259.7" width="7.8" height="7.8" rx="2.2" fill="#1f2d35" opacity="0.55"/>
<rect x="286.2" y="260.2" width="6.6" height="6.6" rx="1.8" fill="url(#no)"/>
<rect x="287.2" y="261.3" width="4.6" height="4.5" rx="1" fill="url(#ng)"/>
<rect x="313.7" y="259.7" width="6.5" height="7.8" rx="2.2" fill="#1f2d35" opacity="0.55"/>
<rect x="314.3" y="260.2" width="5.3" height="6.6" rx="1.8" fill="url(#no)"/>
<rect x="315.3" y="261.3" width="3.3" height="4.5" rx="1" fill="url(#ng)"/>
<rect x="331.8" y="259.7" width="6.5" height="7.8" rx="2.2" fill="#1f2d35" opacity="0.55"/>
<rect x="332.4" y="260.2" width="5.3" height="6.6" rx="1.8" fill="url(#no)"/>
<rect x="333.4" y="261.3" width="3.3" height="4.5" rx="1" fill="url(#ng)"/>
<rect x="522.5" y="267.7" width="9.8" height="7.8" rx="2.2" fill="#1f2d35" opacity="0.55"/>
<rect x="523.1" y="268.2" width="8.6" height="6.6" rx="1.8" fill="url(#no)"/>
<rect x="524.1" y="269.3" width="6.6" height="4.5" rx="1" fill="url(#ng)"/>
<rect x="549.6" y="267.7" width="9.8" height="7.8" rx="2.2" fill="#1f2d35" opacity="0.55"/>
<rect x="550.2" y="268.2" width="8.6" height="6.6" rx="1.8" fill="url(#no)"/>
<rect x="551.2" y="269.3" width="6.6" height="4.5" rx="1" fill="url(#ng)"/>
<rect x="577.5" y="267.7" width="7.8" height="7.8" rx="2.2" fill="#1f2d35" opacity="0.55"/>
<rect x="578.1" y="268.2" width="6.6" height="6.6" rx="1.8" fill="url(#no)"/>
<rect x="579.1" y="269.3" width="4.6" height="4.5" rx="1" fill="url(#ng)"/>
<rect x="604.6" y="267.7" width="6.7" height="7.8" rx="2.2" fill="#1f2d35" opacity="0.55"/>
<rect x="605.2" y="268.2" width="5.5" height="6.6" rx="1.8" fill="url(#no)"/>
<rect x="606.2" y="269.3" width="3.5" height="4.5" rx="1" fill="url(#ng)"/>
<rect x="631.7" y="267.7" width="9.8" height="7.8" rx="2.2" fill="#1f2d35" opacity="0.55"/>
<rect x="632.3" y="268.2" width="8.6" height="6.6" rx="1.8" fill="url(#no)"/>
<rect x="633.3" y="269.3" width="6.6" height="4.5" rx="1" fill="url(#ng)"/>
<rect x="649.7" y="267.7" width="8.6" height="7.8" rx="2.2" fill="#1f2d35" opacity="0.55"/>
<rect x="650.3" y="268.2" width="7.4" height="6.6" rx="1.8" fill="url(#no)"/>
<rect x="651.3" y="269.3" width="5.4" height="4.5" rx="1" fill="url(#ng)"/>
<rect x="85.4" y="283.7" width="9.9" height="7.8" rx="2.2" fill="#1f2d35" opacity="0.55"/>
<rect x="86" y="284.2" width="8.7" height="6.6" rx="1.8" fill="url(#no)"/>
<rect x="87" y="285.3" width="6.7" height="4.5" rx="1" fill="url(#ng)"/>
<rect x="112.5" y="283.7" width="8" height="7.8" rx="2.2" fill="#1f2d35" opacity="0.55"/>
<rect x="113.1" y="284.2" width="6.8" height="6.6" rx="1.8" fill="url(#no)"/>
<rect x="114.1" y="285.3" width="4.8" height="4.5" rx="1" fill="url(#ng)"/>
<rect x="140.6" y="283.7" width="7.8" height="7.8" rx="2.2" fill="#1f2d35" opacity="0.55"/>
<rect x="141.2" y="284.2" width="6.6" height="6.6" rx="1.8" fill="url(#no)"/>
<rect x="142.2" y="285.3" width="4.6" height="4.5" rx="1" fill="url(#ng)"/>
<rect x="167.7" y="299.7" width="8.8" height="7.8" rx="2.2" fill="#1f2d35" opacity="0.55"/>
<rect x="168.3" y="300.2" width="7.6" height="6.6" rx="1.8" fill="url(#no)"/>
<rect x="169.3" y="301.3" width="5.6" height="4.5" rx="1" fill="url(#ng)"/>
<rect x="185.8" y="299.7" width="8.5" height="7.8" rx="2.2" fill="#1f2d35" opacity="0.55"/>
<rect x="186.4" y="300.2" width="7.3" height="6.6" rx="1.8" fill="url(#no)"/>
<rect x="187.4" y="301.3" width="5.3" height="4.5" rx="1" fill="url(#ng)"/>
<rect x="212.6" y="299.7" width="7.8" height="7.8" rx="2.2" fill="#1f2d35" opacity="0.55"/>
<rect x="213.2" y="300.2" width="6.6" height="6.6" rx="1.8" fill="url(#no)"/>
<rect x="214.2" y="301.3" width="4.6" height="4.5" rx="1" fill="url(#ng)"/>
<defs><linearGradient id="ng" x1="0" y1="0" x2="0" y2="1"><stop offset="0" stop-color="#b6e8b9"/><stop offset="1" stop-color="#a7dcab"/></linearGradient><linearGradient id="no" x1="0" y1="0" x2="0" y2="1"><stop offset="0" stop-color="#cbfacd"/><stop offset="0.3" stop-color="#bff1c2"/><stop offset="1" stop-color="#a4d9a9"/></linearGradient></defs>
</svg>

<div class="lbl">Control</div>
<svg class="ctrl" width="655" height="63" viewBox="86 351 655 63">
<rect x="86" y="351" width="655" height="63" fill="#33444e"/>
<path d="M86 366.5H741M86 382.2H741M86 397.8H741" stroke="#26353f" stroke-width="1" fill="none"/>
<path d="M104.5 351V414M141.5 351V414M177.5 351V414M213.5 351V414M250.5 351V414M286.5 351V414M323.5 351V414M359.5 351V414M395.5 351V414M432.5 351V414M468.5 351V414M505.5 351V414M541.5 351V414M578.5 351V414M614.5 351V414M650.5 351V414M687.5 351V414M723.5 351V414" stroke="#293842" stroke-width="1" fill="none"/>
<path d="M122.5 351V414M159.5 351V414M195.5 351V414M268.5 351V414M304.5 351V414M341.5 351V414M414.5 351V414M450.5 351V414M487.5 351V414M559.5 351V414M596.5 351V414M632.5 351V414M705.5 351V414" stroke="#22303a" stroke-width="1" fill="none"/>
<path d="M86.5 351V414M232.5 351V414M377.5 351V414M523.5 351V414M669.5 351V414" stroke="#121c24" stroke-width="1.4" fill="none"/>
<rect x="670" y="351" width="71" height="63" fill="#1c2a33" opacity="0.3"/>
<text x="89" y="367.5" font-family="Liberation Sans, sans-serif" font-size="15.5" fill="#404f5a">Velocity</text>
<path d="M86 351.4H94.7" stroke="#bdf2c1" stroke-width="1.3" fill="none"/>
<path d="M95.3 357.3H113.8" stroke="#bdf2c1" stroke-width="1.3" fill="none"/>
<path d="M95.3 351.6H112.8" stroke="#bdf2c1" stroke-width="1.3" fill="none"/>
<path d="M95.3 351.6H114.8" stroke="#bdf2c1" stroke-width="1.3" fill="none"/>
<path d="M113.1 351.4H119.9" stroke="#bdf2c1" stroke-width="1.3" fill="none"/>
<path d="M122.2 356.3H141.7" stroke="#bdf2c1" stroke-width="1.3" fill="none"/>
<path d="M122.2 353.7H140.7" stroke="#bdf2c1" stroke-width="1.3" fill="none"/>
<path d="M122.2 351.8H142.7" stroke="#bdf2c1" stroke-width="1.3" fill="none"/>
<path d="M141.2 351.4H147.8" stroke="#bdf2c1" stroke-width="1.3" fill="none"/>
<path d="M150.3 354.4H165.7" stroke="#bdf2c1" stroke-width="1.3" fill="none"/>
<path d="M150.3 353.7H166.7" stroke="#bdf2c1" stroke-width="1.3" fill="none"/>
<path d="M150.3 351.6H166.7" stroke="#bdf2c1" stroke-width="1.3" fill="none"/>
<path d="M168.3 351.4H175.9" stroke="#bdf2c1" stroke-width="1.3" fill="none"/>
<path d="M177.3 355.1H184.7" stroke="#bdf2c1" stroke-width="1.3" fill="none"/>
<path d="M177.3 354.4H184.7" stroke="#bdf2c1" stroke-width="1.3" fill="none"/>
<path d="M177.3 351.6H184.7" stroke="#bdf2c1" stroke-width="1.3" fill="none"/>
<path d="M186.4 351.4H193.7" stroke="#bdf2c1" stroke-width="1.3" fill="none"/>
<path d="M195.4 354H215.6" stroke="#bdf2c1" stroke-width="1.3" fill="none"/>
<path d="M195.4 353.3H215.6" stroke="#bdf2c1" stroke-width="1.3" fill="none"/>
<path d="M195.4 351.6H214.6" stroke="#bdf2c1" stroke-width="1.3" fill="none"/>
<path d="M213.2 351.4H219.8" stroke="#bdf2c1" stroke-width="1.3" fill="none"/>
<path d="M223.3 355.5H232.6" stroke="#bdf2c1" stroke-width="1.3" fill="none"/>
<path d="M223.3 354.8H231.7" stroke="#bdf2c1" stroke-width="1.3" fill="none"/>
<path d="M223.3 351.6H231.7" stroke="#bdf2c1" stroke-width="1.3" fill="none"/>
<path d="M232.3 351.4H239.7" stroke="#bdf2c1" stroke-width="1.3" fill="none"/>
<path d="M241.3 355H256.7" stroke="#bdf2c1" stroke-width="1.3" fill="none"/>
<path d="M241.3 354.3H257.7" stroke="#bdf2c1" stroke-width="1.3" fill="none"/>
<path d="M241.3 351.6H258.7" stroke="#bdf2c1" stroke-width="1.3" fill="none"/>
<path d="M259.1 351.4H266.9" stroke="#bdf2c1" stroke-width="1.3" fill="none"/>
<path d="M268.2 355H285.6" stroke="#bdf2c1" stroke-width="1.3" fill="none"/>
<path d="M268.2 354.3H286.6" stroke="#bdf2c1" stroke-width="1.3" fill="none"/>
<path d="M268.2 351.6H286.6" stroke="#bdf2c1" stroke-width="1.3" fill="none"/>
<path d="M286.2 351.4H292.8" stroke="#bdf2c1" stroke-width="1.3" fill="none"/>
<path d="M295.2 356.2H313.7" stroke="#bdf2c1" stroke-width="1.3" fill="none"/>
<path d="M295.2 355.5H314.7" stroke="#bdf2c1" stroke-width="1.3" fill="none"/>
<path d="M295.2 351.6H314.7" stroke="#bdf2c1" stroke-width="1.3" fill="none"/>
<path d="M314.3 351.4H319.6" stroke="#bdf2c1" stroke-width="1.3" fill="none"/>
<path d="M323.3 356.2H328.7" stroke="#bdf2c1" stroke-width="1.3" fill="none"/>
<path d="M323.3 355.5H330.7" stroke="#bdf2c1" stroke-width="1.3" fill="none"/>
<path d="M323.3 351.6H329.7" stroke="#bdf2c1" stroke-width="1.3" fill="none"/>
<path d="M332.4 351.4H337.7" stroke="#bdf2c1" stroke-width="1.3" fill="none"/>
<path d="M341.4 354.7H360.7" stroke="#bdf2c1" stroke-width="1.3" fill="none"/>
<path d="M341.4 354H360.7" stroke="#bdf2c1" stroke-width="1.3" fill="none"/>
<path d="M341.4 351.6H360.7" stroke="#bdf2c1" stroke-width="1.3" fill="none"/>
<path d="M359.2 351.4H364.8" stroke="#bdf2c1" stroke-width="1.3" fill="none"/>
<path d="M368.3 354H376.7" stroke="#bdf2c1" stroke-width="1.3" fill="none"/>
<path d="M368.3 354H376.7" stroke="#bdf2c1" stroke-width="1.3" fill="none"/>
<path d="M368.3 353.3H375.6" stroke="#bdf2c1" stroke-width="1.3" fill="none"/>
<path d="M377.3 351.4H385.7" stroke="#bdf2c1" stroke-width="1.3" fill="none"/>
<path d="M386.2 354.1H404.7" stroke="#bdf2c1" stroke-width="1.3" fill="none"/>
<path d="M386.2 353.4H404.7" stroke="#bdf2c1" stroke-width="1.3" fill="none"/>
<path d="M386.2 351.6H405.7" stroke="#bdf2c1" stroke-width="1.3" fill="none"/>
<path d="M405.1 351.4H410.6" stroke="#bdf2c1" stroke-width="1.3" fill="none"/>
<path d="M414.1 356.2H432.6" stroke="#bdf2c1" stroke-width="1.3" fill="none"/>
<path d="M414.1 355.5H432.6" stroke="#bdf2c1" stroke-width="1.3" fill="none"/>
<path d="M414.1 351.6H433.6" stroke="#bdf2c1" stroke-width="1.3" fill="none"/>
<path d="M432.2 351.4H438.7" stroke="#bdf2c1" stroke-width="1.3" fill="none"/>
<path d="M441.2 355.8H459.6" stroke="#bdf2c1" stroke-width="1.3" fill="none"/>
<path d="M441.2 355.1H459.6" stroke="#bdf2c1" stroke-width="1.3" fill="none"/>
<path d="M441.2 351.6H461.7" stroke="#bdf2c1" stroke-width="1.3" fill="none"/>
<path d="M459.2 351.4H464.6" stroke="#bdf2c1" stroke-width="1.3" fill="none"/>
<path d="M468.3 356.8H476.7" stroke="#bdf2c1" stroke-width="1.3" fill="none"/>
<path d="M468.3 356.1H476.7" stroke="#bdf2c1" stroke-width="1.3" fill="none"/>
<path d="M468.3 351.6H476.7" stroke="#bdf2c1" stroke-width="1.3" fill="none"/>
<path d="M477.3 351.4H483.8" stroke="#bdf2c1" stroke-width="1.3" fill="none"/>
<path d="M487.3 354.7H506.8" stroke="#bdf2c1" stroke-width="1.3" fill="none"/>
<path d="M487.3 354H505.8" stroke="#bdf2c1" stroke-width="1.3" fill="none"/>
<path d="M487.3 351.6H506.8" stroke="#bdf2c1" stroke-width="1.3" fill="none"/>
<path d="M505.2 351.4H511.7" stroke="#bdf2c1" stroke-width="1.3" fill="none"/>
<path d="M514.2 357.3H520.8" stroke="#bdf2c1" stroke-width="1.3" fill="none"/>
<path d="M514.2 353.6H517.7" stroke="#bdf2c1" stroke-width="1.3" fill="none"/>
<path d="M514.2 351.6H522.8" stroke="#bdf2c1" stroke-width="1.3" fill="none"/>
<path d="M523.1 351.4H531.7" stroke="#bdf2c1" stroke-width="1.3" fill="none"/>
<path d="M532.2 354.7H550.6" stroke="#bdf2c1" stroke-width="1.3" fill="none"/>
<path d="M532.2 354H551.6" stroke="#bdf2c1" stroke-width="1.3" fill="none"/>
<path d="M532.2 351.6H550.6" stroke="#bdf2c1" stroke-width="1.3" fill="none"/>
<path d="M550.2 351.4H558.8" stroke="#bdf2c1" stroke-width="1.3" fill="none"/>
<path d="M559.2 355.1H578.7" stroke="#bdf2c1" stroke-width="1.3" fill="none"/>
<path d="M559.2 354.4H578.7" stroke="#bdf2c1" stroke-width="1.3" fill="none"/>
<path d="M559.2 351.6H578.7" stroke="#bdf2c1" stroke-width="1.3" fill="none"/>
<path d="M578.1 351.4H584.7" stroke="#bdf2c1" stroke-width="1.3" fill="none"/>
<path d="M587.1 353.7H605.6" stroke="#bdf2c1" stroke-width="1.3" fill="none"/>
<path d="M587.1 353H607.6" stroke="#bdf2c1" stroke-width="1.3" fill="none"/>
<path d="M587.1 351.6H605.6" stroke="#bdf2c1" stroke-width="1.3" fill="none"/>
<path d="M605.2 351.4H610.7" stroke="#bdf2c1" stroke-width="1.3" fill="none"/>
<path d="M614.2 354.5H618.7" stroke="#bdf2c1" stroke-width="1.3" fill="none"/>
<path d="M614.2 353.8H619.7" stroke="#bdf2c1" stroke-width="1.3" fill="none"/>
<path d="M614.2 351.6H618.7" stroke="#bdf2c1" stroke-width="1.3" fill="none"/>
<path d="M623.2 354.8H628.8" stroke="#bdf2c1" stroke-width="1.3" fill="none"/>
<path d="M623.2 354.1H630.8" stroke="#bdf2c1" stroke-width="1.3" fill="none"/>
<path d="M623.2 351.6H627.7" stroke="#bdf2c1" stroke-width="1.3" fill="none"/>
<path d="M632.3 351.4H640.9" stroke="#bdf2c1" stroke-width="1.3" fill="none"/>
<path d="M641.3 353.3H650.7" stroke="#bdf2c1" stroke-width="1.3" fill="none"/>
<path d="M641.3 352.6H650.7" stroke="#bdf2c1" stroke-width="1.3" fill="none"/>
<path d="M641.3 351.6H649.7" stroke="#bdf2c1" stroke-width="1.3" fill="none"/>
<path d="M650.3 351.4H657.7" stroke="#bdf2c1" stroke-width="1.3" fill="none"/>
<path d="M660.2 353.3H667.7" stroke="#bdf2c1" stroke-width="1.3" fill="none"/>
<path d="M660.2 352.6H666.7" stroke="#bdf2c1" stroke-width="1.3" fill="none"/>
<path d="M660.2 351.6H666.7" stroke="#bdf2c1" stroke-width="1.3" fill="none"/>
<rect x="86" y="351.4" width="2" height="62.6" fill="#b2e8b7"/>
<rect x="85.9" y="351.4" width="1.2" height="62.6" fill="#c9fdcd"/>
<rect x="94" y="357.3" width="3" height="56.7" fill="#b2e8b7"/>
<rect x="94.9" y="357.3" width="1.2" height="56.7" fill="#c9fdcd"/>
<rect x="94" y="351.6" width="3" height="62.4" fill="#b2e8b7"/>
<rect x="94.9" y="351.6" width="1.2" height="62.4" fill="#c9fdcd"/>
<rect x="94" y="351.6" width="3" height="62.4" fill="#b2e8b7"/>
<rect x="94.9" y="351.6" width="1.2" height="62.4" fill="#c9fdcd"/>
<rect x="112" y="351.4" width="3" height="62.6" fill="#b2e8b7"/>
<rect x="112.9" y="351.4" width="1.2" height="62.6" fill="#c9fdcd"/>
<rect x="121" y="356.3" width="3" height="57.7" fill="#b2e8b7"/>
<rect x="121.9" y="356.3" width="1.2" height="57.7" fill="#c9fdcd"/>
<rect x="121" y="353.7" width="3" height="60.3" fill="#b2e8b7"/>
<rect x="121.9" y="353.7" width="1.2" height="60.3" fill="#c9fdcd"/>
<rect x="121" y="351.8" width="3" height="62.2" fill="#b2e8b7"/>
<rect x="121.9" y="351.8" width="1.2" height="62.2" fill="#c9fdcd"/>
<rect x="140" y="351.4" width="3" height="62.6" fill="#b2e8b7"/>
<rect x="140.9" y="351.4" width="1.2" height="62.6" fill="#c9fdcd"/>
<rect x="149" y="354.4" width="3" height="59.6" fill="#b2e8b7"/>
<rect x="149.9" y="354.4" width="1.2" height="59.6" fill="#c9fdcd"/>
<rect x="149" y="353.7" width="3" height="60.3" fill="#b2e8b7"/>
<rect x="149.9" y="353.7" width="1.2" height="60.3" fill="#c9fdcd"/>
<rect x="149" y="351.6" width="3" height="62.4" fill="#b2e8b7"/>
<rect x="149.9" y="351.6" width="1.2" height="62.4" fill="#c9fdcd"/>
<rect x="167" y="351.4" width="3" height="62.6" fill="#b2e8b7"/>
<rect x="167.9" y="351.4" width="1.2" height="62.6" fill="#c9fdcd"/>
<rect x="176" y="355.1" width="3" height="58.9" fill="#b2e8b7"/>
<rect x="176.9" y="355.1" width="1.2" height="58.9" fill="#c9fdcd"/>
<rect x="176" y="354.4" width="3" height="59.6" fill="#b2e8b7"/>
<rect x="176.9" y="354.4" width="1.2" height="59.6" fill="#c9fdcd"/>
<rect x="176" y="351.6" width="3" height="62.4" fill="#b2e8b7"/>
<rect x="176.9" y="351.6" width="1.2" height="62.4" fill="#c9fdcd"/>
<rect x="185" y="351.4" width="3" height="62.6" fill="#b2e8b7"/>
<rect x="185.9" y="351.4" width="1.2" height="62.6" fill="#c9fdcd"/>
<rect x="194" y="354" width="3" height="60" fill="#b2e8b7"/>
<rect x="194.9" y="354" width="1.2" height="60" fill="#c9fdcd"/>
<rect x="194" y="353.3" width="3" height="60.7" fill="#b2e8b7"/>
<rect x="194.9" y="353.3" width="1.2" height="60.7" fill="#c9fdcd"/>
<rect x="194" y="351.6" width="3" height="62.4" fill="#b2e8b7"/>
<rect x="194.9" y="351.6" width="1.2" height="62.4" fill="#c9fdcd"/>
<rect x="212" y="351.4" width="3" height="62.6" fill="#b2e8b7"/>
<rect x="212.9" y="351.4" width="1.2" height="62.6" fill="#c9fdcd"/>
<rect x="222" y="355.5" width="3" height="58.5" fill="#b2e8b7"/>
<rect x="222.9" y="355.5" width="1.2" height="58.5" fill="#c9fdcd"/>
<rect x="222" y="354.8" width="3" height="59.2" fill="#b2e8b7"/>
<rect x="222.9" y="354.8" width="1.2" height="59.2" fill="#c9fdcd"/>
<rect x="222" y="351.6" width="3" height="62.4" fill="#b2e8b7"/>
<rect x="222.9" y="351.6" width="1.2" height="62.4" fill="#c9fdcd"/>
<rect x="231" y="351.4" width="3" height="62.6" fill="#b2e8b7"/>
<rect x="231.9" y="351.4" width="1.2" height="62.6" fill="#c9fdcd"/>
<rect x="240" y="355" width="3" height="59" fill="#b2e8b7"/>
<rect x="240.9" y="355" width="1.2" height="59" fill="#c9fdcd"/>
<rect x="240" y="354.3" width="3" height="59.7" fill="#b2e8b7"/>
<rect x="240.9" y="354.3" width="1.2" height="59.7" fill="#c9fdcd"/>
<rect x="240" y="351.6" width="3" height="62.4" fill="#b2e8b7"/>
<rect x="240.9" y="351.6" width="1.2" height="62.4" fill="#c9fdcd"/>
<rect x="258" y="351.4" width="3" height="62.6" fill="#b2e8b7"/>
<rect x="258.9" y="351.4" width="1.2" height="62.6" fill="#c9fdcd"/>
<rect x="267" y="355" width="3" height="59" fill="#b2e8b7"/>
<rect x="267.9" y="355" width="1.2" height="59" fill="#c9fdcd"/>
<rect x="267" y="354.3" width="3" height="59.7" fill="#b2e8b7"/>
<rect x="267.9" y="354.3" width="1.2" height="59.7" fill="#c9fdcd"/>
<rect x="267" y="351.6" width="3" height="62.4" fill="#b2e8b7"/>
<rect x="267.9" y="351.6" width="1.2" height="62.4" fill="#c9fdcd"/>
<rect x="285" y="351.4" width="3" height="62.6" fill="#b2e8b7"/>
<rect x="285.9" y="351.4" width="1.2" height="62.6" fill="#c9fdcd"/>
<rect x="294" y="356.2" width="3" height="57.8" fill="#b2e8b7"/>
<rect x="294.9" y="356.2" width="1.2" height="57.8" fill="#c9fdcd"/>
<rect x="294" y="355.5" width="3" height="58.5" fill="#b2e8b7"/>
<rect x="294.9" y="355.5" width="1.2" height="58.5" fill="#c9fdcd"/>
<rect x="294" y="351.6" width="3" height="62.4" fill="#b2e8b7"/>
<rect x="294.9" y="351.6" width="1.2" height="62.4" fill="#c9fdcd"/>
<rect x="313" y="351.4" width="3" height="62.6" fill="#b2e8b7"/>
<rect x="313.9" y="351.4" width="1.2" height="62.6" fill="#c9fdcd"/>
<rect x="322" y="356.2" width="3" height="57.8" fill="#b2e8b7"/>
<rect x="322.9" y="356.2" width="1.2" height="57.8" fill="#c9fdcd"/>
<rect x="322" y="355.5" width="3" height="58.5" fill="#b2e8b7"/>
<rect x="322.9" y="355.5" width="1.2" height="58.5" fill="#c9fdcd"/>
<rect x="322" y="351.6" width="3" height="62.4" fill="#b2e8b7"/>
<rect x="322.9" y="351.6" width="1.2" height="62.4" fill="#c9fdcd"/>
<rect x="331" y="351.4" width="3" height="62.6" fill="#b2e8b7"/>
<rect x="331.9" y="351.4" width="1.2" height="62.6" fill="#c9fdcd"/>
<rect x="340" y="354.7" width="3" height="59.3" fill="#b2e8b7"/>
<rect x="340.9" y="354.7" width="1.2" height="59.3" fill="#c9fdcd"/>
<rect x="340" y="354" width="3" height="60" fill="#b2e8b7"/>
<rect x="340.9" y="354" width="1.2" height="60" fill="#c9fdcd"/>
<rect x="340" y="351.6" width="3" height="62.4" fill="#b2e8b7"/>
<rect x="340.9" y="351.6" width="1.2" height="62.4" fill="#c9fdcd"/>
<rect x="358" y="351.4" width="3" height="62.6" fill="#b2e8b7"/>
<rect x="358.9" y="351.4" width="1.2" height="62.6" fill="#c9fdcd"/>
<rect x="367" y="354" width="3" height="60" fill="#b2e8b7"/>
<rect x="367.9" y="354" width="1.2" height="60" fill="#c9fdcd"/>
<rect x="367" y="354" width="3" height="60" fill="#b2e8b7"/>
<rect x="367.9" y="354" width="1.2" height="60" fill="#c9fdcd"/>
<rect x="367" y="353.3" width="3" height="60.7" fill="#b2e8b7"/>
<rect x="367.9" y="353.3" width="1.2" height="60.7" fill="#c9fdcd"/>
<rect x="376" y="351.4" width="3" height="62.6" fill="#b2e8b7"/>
<rect x="376.9" y="351.4" width="1.2" height="62.6" fill="#c9fdcd"/>
<rect x="385" y="354.1" width="3" height="59.9" fill="#b2e8b7"/>
<rect x="385.9" y="354.1" width="1.2" height="59.9" fill="#c9fdcd"/>
<rect x="385" y="353.4" width="3" height="60.6" fill="#b2e8b7"/>
<rect x="385.9" y="353.4" width="1.2" height="60.6" fill="#c9fdcd"/>
<rect x="385" y="351.6" width="3" height="62.4" fill="#b2e8b7"/>
<rect x="385.9" y="351.6" width="1.2" height="62.4" fill="#c9fdcd"/>
<rect x="404" y="351.4" width="3" height="62.6" fill="#b2e8b7"/>
<rect x="404.9" y="351.4" width="1.2" height="62.6" fill="#c9fdcd"/>
<rect x="413" y="356.2" width="3" height="57.8" fill="#b2e8b7"/>
<rect x="413.9" y="356.2" width="1.2" height="57.8" fill="#c9fdcd"/>
<rect x="413" y="355.5" width="3" height="58.5" fill="#b2e8b7"/>
<rect x="413.9" y="355.5" width="1.2" height="58.5" fill="#c9fdcd"/>
<rect x="413" y="351.6" width="3" height="62.4" fill="#b2e8b7"/>
<rect x="413.9" y="351.6" width="1.2" height="62.4" fill="#c9fdcd"/>
<rect x="431" y="351.4" width="3" height="62.6" fill="#b2e8b7"/>
<rect x="431.9" y="351.4" width="1.2" height="62.6" fill="#c9fdcd"/>
<rect x="440" y="355.8" width="3" height="58.2" fill="#b2e8b7"/>
<rect x="440.9" y="355.8" width="1.2" height="58.2" fill="#c9fdcd"/>
<rect x="440" y="355.1" width="3" height="58.9" fill="#b2e8b7"/>
<rect x="440.9" y="355.1" width="1.2" height="58.9" fill="#c9fdcd"/>
<rect x="440" y="351.6" width="3" height="62.4" fill="#b2e8b7"/>
<rect x="440.9" y="351.6" width="1.2" height="62.4" fill="#c9fdcd"/>
<rect x="458" y="351.4" width="3" height="62.6" fill="#b2e8b7"/>
<rect x="458.9" y="351.4" width="1.2" height="62.6" fill="#c9fdcd"/>
<rect x="467" y="356.8" width="3" height="57.2" fill="#b2e8b7"/>
<rect x="467.9" y="356.8" width="1.2" height="57.2" fill="#c9fdcd"/>
<rect x="467" y="356.1" width="3" height="57.9" fill="#b2e8b7"/>
<rect x="467.9" y="356.1" width="1.2" height="57.9" fill="#c9fdcd"/>
<rect x="467" y="351.6" width="3" height="62.4" fill="#b2e8b7"/>
<rect x="467.9" y="351.6" width="1.2" height="62.4" fill="#c9fdcd"/>
<rect x="476" y="351.4" width="3" height="62.6" fill="#b2e8b7"/>
<rect x="476.9" y="351.4" width="1.2" height="62.6" fill="#c9fdcd"/>
<rect x="486" y="354.7" width="3" height="59.3" fill="#b2e8b7"/>
<rect x="486.9" y="354.7" width="1.2" height="59.3" fill="#c9fdcd"/>
<rect x="486" y="354" width="3" height="60" fill="#b2e8b7"/>
<rect x="486.9" y="354" width="1.2" height="60" fill="#c9fdcd"/>
<rect x="486" y="351.6" width="3" height="62.4" fill="#b2e8b7"/>
<rect x="486.9" y="351.6" width="1.2" height="62.4" fill="#c9fdcd"/>
<rect x="504" y="351.4" width="3" height="62.6" fill="#b2e8b7"/>
<rect x="504.9" y="351.4" width="1.2" height="62.6" fill="#c9fdcd"/>
<rect x="513" y="357.3" width="3" height="56.7" fill="#b2e8b7"/>
<rect x="513.9" y="357.3" width="1.2" height="56.7" fill="#c9fdcd"/>
<rect x="513" y="353.6" width="3" height="60.4" fill="#b2e8b7"/>
<rect x="513.9" y="353.6" width="1.2" height="60.4" fill="#c9fdcd"/>
<rect x="513" y="351.6" width="3" height="62.4" fill="#b2e8b7"/>
<rect x="513.9" y="351.6" width="1.2" height="62.4" fill="#c9fdcd"/>
<rect x="522" y="351.4" width="3" height="62.6" fill="#b2e8b7"/>
<rect x="522.9" y="351.4" width="1.2" height="62.6" fill="#c9fdcd"/>
<rect x="531" y="354.7" width="3" height="59.3" fill="#b2e8b7"/>
<rect x="531.9" y="354.7" width="1.2" height="59.3" fill="#c9fdcd"/>
<rect x="531" y="354" width="3" height="60" fill="#b2e8b7"/>
<rect x="531.9" y="354" width="1.2" height="60" fill="#c9fdcd"/>
<rect x="531" y="351.6" width="3" height="62.4" fill="#b2e8b7"/>
<rect x="531.9" y="351.6" width="1.2" height="62.4" fill="#c9fdcd"/>
<rect x="549" y="351.4" width="3" height="62.6" fill="#b2e8b7"/>
<rect x="549.9" y="351.4" width="1.2" height="62.6" fill="#c9fdcd"/>
<rect x="558" y="355.1" width="3" height="58.9" fill="#b2e8b7"/>
<rect x="558.9" y="355.1" width="1.2" height="58.9" fill="#c9fdcd"/>
<rect x="558" y="354.4" width="3" height="59.6" fill="#b2e8b7"/>
<rect x="558.9" y="354.4" width="1.2" height="59.6" fill="#c9fdcd"/>
<rect x="558" y="351.6" width="3" height="62.4" fill="#b2e8b7"/>
<rect x="558.9" y="351.6" width="1.2" height="62.4" fill="#c9fdcd"/>
<rect x="577" y="351.4" width="3" height="62.6" fill="#b2e8b7"/>
<rect x="577.9" y="351.4" width="1.2" height="62.6" fill="#c9fdcd"/>
<rect x="586" y="353.7" width="3" height="60.3" fill="#b2e8b7"/>
<rect x="586.9" y="353.7" width="1.2" height="60.3" fill="#c9fdcd"/>
<rect x="586" y="353" width="3" height="61" fill="#b2e8b7"/>
<rect x="586.9" y="353" width="1.2" height="61" fill="#c9fdcd"/>
<rect x="586" y="351.6" width="3" height="62.4" fill="#b2e8b7"/>
<rect x="586.9" y="351.6" width="1.2" height="62.4" fill="#c9fdcd"/>
<rect x="604" y="351.4" width="3" height="62.6" fill="#b2e8b7"/>
<rect x="604.9" y="351.4" width="1.2" height="62.6" fill="#c9fdcd"/>
<rect x="613" y="354.5" width="3" height="59.5" fill="#b2e8b7"/>
<rect x="613.9" y="354.5" width="1.2" height="59.5" fill="#c9fdcd"/>
<rect x="613" y="353.8" width="3" height="60.2" fill="#b2e8b7"/>
<rect x="613.9" y="353.8" width="1.2" height="60.2" fill="#c9fdcd"/>
<rect x="613" y="351.6" width="3" height="62.4" fill="#b2e8b7"/>
<rect x="613.9" y="351.6" width="1.2" height="62.4" fill="#c9fdcd"/>
<rect x="622" y="354.8" width="3" height="59.2" fill="#b2e8b7"/>
<rect x="622.9" y="354.8" width="1.2" height="59.2" fill="#c9fdcd"/>
<rect x="622" y="354.1" width="3" height="59.9" fill="#b2e8b7"/>
<rect x="622.9" y="354.1" width="1.2" height="59.9" fill="#c9fdcd"/>
<rect x="622" y="351.6" width="3" height="62.4" fill="#b2e8b7"/>
<rect x="622.9" y="351.6" width="1.2" height="62.4" fill="#c9fdcd"/>
<rect x="631" y="351.4" width="3" height="62.6" fill="#b2e8b7"/>
<rect x="631.9" y="351.4" width="1.2" height="62.6" fill="#c9fdcd"/>
<rect x="640" y="353.3" width="3" height="60.7" fill="#b2e8b7"/>
<rect x="640.9" y="353.3" width="1.2" height="60.7" fill="#c9fdcd"/>
<rect x="640" y="352.6" width="3" height="61.4" fill="#b2e8b7"/>
<rect x="640.9" y="352.6" width="1.2" height="61.4" fill="#c9fdcd"/>
<rect x="640" y="351.6" width="3" height="62.4" fill="#b2e8b7"/>
<rect x="640.9" y="351.6" width="1.2" height="62.4" fill="#c9fdcd"/>
<rect x="649" y="351.4" width="3" height="62.6" fill="#b2e8b7"/>
<rect x="649.9" y="351.4" width="1.2" height="62.6" fill="#c9fdcd"/>
<rect x="659" y="353.3" width="3" height="60.7" fill="#b2e8b7"/>
<rect x="659.9" y="353.3" width="1.2" height="60.7" fill="#c9fdcd"/>
<rect x="659" y="352.6" width="3" height="61.4" fill="#b2e8b7"/>
<rect x="659.9" y="352.6" width="1.2" height="61.4" fill="#c9fdcd"/>
<rect x="659" y="351.6" width="3" height="62.4" fill="#b2e8b7"/>
<rect x="659.9" y="351.6" width="1.2" height="62.4" fill="#c9fdcd"/>
<circle cx="87" cy="351.4" r="2.9" fill="#578f5e" stroke="#b2e8b7" stroke-width="0.9"/>
<circle cx="95.5" cy="357.3" r="2.9" fill="#578f5e" stroke="#b2e8b7" stroke-width="0.9"/>
<circle cx="95.5" cy="351.6" r="2.9" fill="#578f5e" stroke="#b2e8b7" stroke-width="0.9"/>
<circle cx="95.5" cy="351.6" r="2.9" fill="#578f5e" stroke="#b2e8b7" stroke-width="0.9"/>
<circle cx="113.5" cy="351.4" r="2.9" fill="#578f5e" stroke="#b2e8b7" stroke-width="0.9"/>
<circle cx="122.5" cy="356.3" r="2.9" fill="#578f5e" stroke="#b2e8b7" stroke-width="0.9"/>
<circle cx="122.5" cy="353.7" r="2.9" fill="#578f5e" stroke="#b2e8b7" stroke-width="0.9"/>
<circle cx="122.5" cy="351.8" r="2.9" fill="#578f5e" stroke="#b2e8b7" stroke-width="0.9"/>
<circle cx="141.5" cy="351.4" r="2.9" fill="#578f5e" stroke="#b2e8b7" stroke-width="0.9"/>
<circle cx="150.5" cy="354.4" r="2.9" fill="#578f5e" stroke="#b2e8b7" stroke-width="0.9"/>
<circle cx="150.5" cy="353.7" r="2.9" fill="#578f5e" stroke="#b2e8b7" stroke-width="0.9"/>
<circle cx="150.5" cy="351.6" r="2.9" fill="#578f5e" stroke="#b2e8b7" stroke-width="0.9"/>
<circle cx="168.5" cy="351.4" r="2.9" fill="#578f5e" stroke="#b2e8b7" stroke-width="0.9"/>
<circle cx="177.5" cy="355.1" r="2.9" fill="#578f5e" stroke="#b2e8b7" stroke-width="0.9"/>
<circle cx="177.5" cy="354.4" r="2.9" fill="#578f5e" stroke="#b2e8b7" stroke-width="0.9"/>
<circle cx="177.5" cy="351.6" r="2.9" fill="#578f5e" stroke="#b2e8b7" stroke-width="0.9"/>
<circle cx="186.5" cy="351.4" r="2.9" fill="#578f5e" stroke="#b2e8b7" stroke-width="0.9"/>
<circle cx="195.5" cy="354" r="2.9" fill="#578f5e" stroke="#b2e8b7" stroke-width="0.9"/>
<circle cx="195.5" cy="353.3" r="2.9" fill="#578f5e" stroke="#b2e8b7" stroke-width="0.9"/>
<circle cx="195.5" cy="351.6" r="2.9" fill="#578f5e" stroke="#b2e8b7" stroke-width="0.9"/>
<circle cx="213.5" cy="351.4" r="2.9" fill="#578f5e" stroke="#b2e8b7" stroke-width="0.9"/>
<circle cx="223.5" cy="355.5" r="2.9" fill="#578f5e" stroke="#b2e8b7" stroke-width="0.9"/>
<circle cx="223.5" cy="354.8" r="2.9" fill="#578f5e" stroke="#b2e8b7" stroke-width="0.9"/>
<circle cx="223.5" cy="351.6" r="2.9" fill="#578f5e" stroke="#b2e8b7" stroke-width="0.9"/>
<circle cx="232.5" cy="351.4" r="2.9" fill="#578f5e" stroke="#b2e8b7" stroke-width="0.9"/>
<circle cx="241.5" cy="355" r="2.9" fill="#578f5e" stroke="#b2e8b7" stroke-width="0.9"/>
<circle cx="241.5" cy="354.3" r="2.9" fill="#578f5e" stroke="#b2e8b7" stroke-width="0.9"/>
<circle cx="241.5" cy="351.6" r="2.9" fill="#578f5e" stroke="#b2e8b7" stroke-width="0.9"/>
<circle cx="259.5" cy="351.4" r="2.9" fill="#578f5e" stroke="#b2e8b7" stroke-width="0.9"/>
<circle cx="268.5" cy="355" r="2.9" fill="#578f5e" stroke="#b2e8b7" stroke-width="0.9"/>
<circle cx="268.5" cy="354.3" r="2.9" fill="#578f5e" stroke="#b2e8b7" stroke-width="0.9"/>
<circle cx="268.5" cy="351.6" r="2.9" fill="#578f5e" stroke="#b2e8b7" stroke-width="0.9"/>
<circle cx="286.5" cy="351.4" r="2.9" fill="#578f5e" stroke="#b2e8b7" stroke-width="0.9"/>
<circle cx="295.5" cy="356.2" r="2.9" fill="#578f5e" stroke="#b2e8b7" stroke-width="0.9"/>
<circle cx="295.5" cy="355.5" r="2.9" fill="#578f5e" stroke="#b2e8b7" stroke-width="0.9"/>
<circle cx="295.5" cy="351.6" r="2.9" fill="#578f5e" stroke="#b2e8b7" stroke-width="0.9"/>
<circle cx="314.5" cy="351.4" r="2.9" fill="#578f5e" stroke="#b2e8b7" stroke-width="0.9"/>
<circle cx="323.5" cy="356.2" r="2.9" fill="#578f5e" stroke="#b2e8b7" stroke-width="0.9"/>
<circle cx="323.5" cy="355.5" r="2.9" fill="#578f5e" stroke="#b2e8b7" stroke-width="0.9"/>
<circle cx="323.5" cy="351.6" r="2.9" fill="#578f5e" stroke="#b2e8b7" stroke-width="0.9"/>
<circle cx="332.5" cy="351.4" r="2.9" fill="#578f5e" stroke="#b2e8b7" stroke-width="0.9"/>
<circle cx="341.5" cy="354.7" r="2.9" fill="#578f5e" stroke="#b2e8b7" stroke-width="0.9"/>
<circle cx="341.5" cy="354" r="2.9" fill="#578f5e" stroke="#b2e8b7" stroke-width="0.9"/>
<circle cx="341.5" cy="351.6" r="2.9" fill="#578f5e" stroke="#b2e8b7" stroke-width="0.9"/>
<circle cx="359.5" cy="351.4" r="2.9" fill="#578f5e" stroke="#b2e8b7" stroke-width="0.9"/>
<circle cx="368.5" cy="354" r="2.9" fill="#578f5e" stroke="#b2e8b7" stroke-width="0.9"/>
<circle cx="368.5" cy="354" r="2.9" fill="#578f5e" stroke="#b2e8b7" stroke-width="0.9"/>
<circle cx="368.5" cy="353.3" r="2.9" fill="#578f5e" stroke="#b2e8b7" stroke-width="0.9"/>
<circle cx="377.5" cy="351.4" r="2.9" fill="#578f5e" stroke="#b2e8b7" stroke-width="0.9"/>
<circle cx="386.5" cy="354.1" r="2.9" fill="#578f5e" stroke="#b2e8b7" stroke-width="0.9"/>
<circle cx="386.5" cy="353.4" r="2.9" fill="#578f5e" stroke="#b2e8b7" stroke-width="0.9"/>
<circle cx="386.5" cy="351.6" r="2.9" fill="#578f5e" stroke="#b2e8b7" stroke-width="0.9"/>
<circle cx="405.5" cy="351.4" r="2.9" fill="#578f5e" stroke="#b2e8b7" stroke-width="0.9"/>
<circle cx="414.5" cy="356.2" r="2.9" fill="#578f5e" stroke="#b2e8b7" stroke-width="0.9"/>
<circle cx="414.5" cy="355.5" r="2.9" fill="#578f5e" stroke="#b2e8b7" stroke-width="0.9"/>
<circle cx="414.5" cy="351.6" r="2.9" fill="#578f5e" stroke="#b2e8b7" stroke-width="0.9"/>
<circle cx="432.5" cy="351.4" r="2.9" fill="#578f5e" stroke="#b2e8b7" stroke-width="0.9"/>
<circle cx="441.5" cy="355.8" r="2.9" fill="#578f5e" stroke="#b2e8b7" stroke-width="0.9"/>
<circle cx="441.5" cy="355.1" r="2.9" fill="#578f5e" stroke="#b2e8b7" stroke-width="0.9"/>
<circle cx="441.5" cy="351.6" r="2.9" fill="#578f5e" stroke="#b2e8b7" stroke-width="0.9"/>
<circle cx="459.5" cy="351.4" r="2.9" fill="#578f5e" stroke="#b2e8b7" stroke-width="0.9"/>
<circle cx="468.5" cy="356.8" r="2.9" fill="#578f5e" stroke="#b2e8b7" stroke-width="0.9"/>
<circle cx="468.5" cy="356.1" r="2.9" fill="#578f5e" stroke="#b2e8b7" stroke-width="0.9"/>
<circle cx="468.5" cy="351.6" r="2.9" fill="#578f5e" stroke="#b2e8b7" stroke-width="0.9"/>
<circle cx="477.5" cy="351.4" r="2.9" fill="#578f5e" stroke="#b2e8b7" stroke-width="0.9"/>
<circle cx="487.5" cy="354.7" r="2.9" fill="#578f5e" stroke="#b2e8b7" stroke-width="0.9"/>
<circle cx="487.5" cy="354" r="2.9" fill="#578f5e" stroke="#b2e8b7" stroke-width="0.9"/>
<circle cx="487.5" cy="351.6" r="2.9" fill="#578f5e" stroke="#b2e8b7" stroke-width="0.9"/>
<circle cx="505.5" cy="351.4" r="2.9" fill="#578f5e" stroke="#b2e8b7" stroke-width="0.9"/>
<circle cx="514.5" cy="357.3" r="2.9" fill="#578f5e" stroke="#b2e8b7" stroke-width="0.9"/>
<circle cx="514.5" cy="353.6" r="2.9" fill="#578f5e" stroke="#b2e8b7" stroke-width="0.9"/>
<circle cx="514.5" cy="351.6" r="2.9" fill="#578f5e" stroke="#b2e8b7" stroke-width="0.9"/>
<circle cx="523.5" cy="351.4" r="2.9" fill="#578f5e" stroke="#b2e8b7" stroke-width="0.9"/>
<circle cx="532.5" cy="354.7" r="2.9" fill="#578f5e" stroke="#b2e8b7" stroke-width="0.9"/>
<circle cx="532.5" cy="354" r="2.9" fill="#578f5e" stroke="#b2e8b7" stroke-width="0.9"/>
<circle cx="532.5" cy="351.6" r="2.9" fill="#578f5e" stroke="#b2e8b7" stroke-width="0.9"/>
<circle cx="550.5" cy="351.4" r="2.9" fill="#578f5e" stroke="#b2e8b7" stroke-width="0.9"/>
<circle cx="559.5" cy="355.1" r="2.9" fill="#578f5e" stroke="#b2e8b7" stroke-width="0.9"/>
<circle cx="559.5" cy="354.4" r="2.9" fill="#578f5e" stroke="#b2e8b7" stroke-width="0.9"/>
<circle cx="559.5" cy="351.6" r="2.9" fill="#578f5e" stroke="#b2e8b7" stroke-width="0.9"/>
<circle cx="578.5" cy="351.4" r="2.9" fill="#578f5e" stroke="#b2e8b7" stroke-width="0.9"/>
<circle cx="587.5" cy="353.7" r="2.9" fill="#578f5e" stroke="#b2e8b7" stroke-width="0.9"/>
<circle cx="587.5" cy="353" r="2.9" fill="#578f5e" stroke="#b2e8b7" stroke-width="0.9"/>
<circle cx="587.5" cy="351.6" r="2.9" fill="#578f5e" stroke="#b2e8b7" stroke-width="0.9"/>
<circle cx="605.5" cy="351.4" r="2.9" fill="#578f5e" stroke="#b2e8b7" stroke-width="0.9"/>
<circle cx="614.5" cy="354.5" r="2.9" fill="#578f5e" stroke="#b2e8b7" stroke-width="0.9"/>
<circle cx="614.5" cy="353.8" r="2.9" fill="#578f5e" stroke="#b2e8b7" stroke-width="0.9"/>
<circle cx="614.5" cy="351.6" r="2.9" fill="#578f5e" stroke="#b2e8b7" stroke-width="0.9"/>
<circle cx="623.5" cy="354.8" r="2.9" fill="#578f5e" stroke="#b2e8b7" stroke-width="0.9"/>
<circle cx="623.5" cy="354.1" r="2.9" fill="#578f5e" stroke="#b2e8b7" stroke-width="0.9"/>
<circle cx="623.5" cy="351.6" r="2.9" fill="#578f5e" stroke="#b2e8b7" stroke-width="0.9"/>
<circle cx="632.5" cy="351.4" r="2.9" fill="#578f5e" stroke="#b2e8b7" stroke-width="0.9"/>
<circle cx="641.5" cy="353.3" r="2.9" fill="#578f5e" stroke="#b2e8b7" stroke-width="0.9"/>
<circle cx="641.5" cy="352.6" r="2.9" fill="#578f5e" stroke="#b2e8b7" stroke-width="0.9"/>
<circle cx="641.5" cy="351.6" r="2.9" fill="#578f5e" stroke="#b2e8b7" stroke-width="0.9"/>
<circle cx="650.5" cy="351.4" r="2.9" fill="#578f5e" stroke="#b2e8b7" stroke-width="0.9"/>
<circle cx="660.5" cy="353.3" r="2.9" fill="#578f5e" stroke="#b2e8b7" stroke-width="0.9"/>
<circle cx="660.5" cy="352.6" r="2.9" fill="#578f5e" stroke="#b2e8b7" stroke-width="0.9"/>
<circle cx="660.5" cy="351.6" r="2.9" fill="#578f5e" stroke="#b2e8b7" stroke-width="0.9"/>
</svg>

</div></div>
</body>
</html>
